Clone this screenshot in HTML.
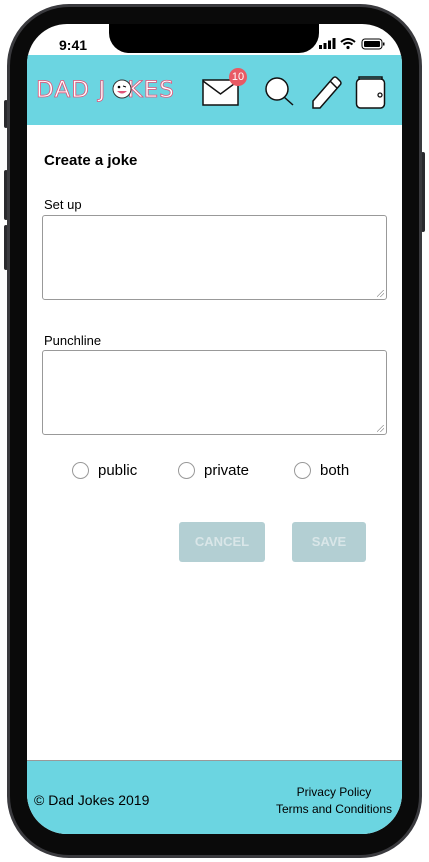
<!DOCTYPE html>
<html><head><meta charset="utf-8">
<style>
*{margin:0;padding:0;box-sizing:border-box}
html,body{width:429px;height:862px;background:#fff;overflow:hidden;font-family:"Liberation Sans",sans-serif}
.phone{position:absolute;left:7px;top:4px;width:415px;height:854px;background:#0a0a0a;border-radius:62px;border:3px solid #3a3a3e}
.btn{position:absolute;background:#2a2a2e;width:4px;left:4px;border-radius:2px}
.screen{position:absolute;left:27px;top:24px;width:375px;height:810px;background:#fff;border-radius:40px;overflow:hidden}
.notch{position:absolute;left:82px;top:0;width:210px;height:29px;background:#000;border-radius:0 0 20px 20px}
.time{position:absolute;left:32px;top:13px;font-size:14px;font-weight:bold}
.hdr{position:absolute;left:0;top:31px;width:375px;height:70px;background:#6bd5e1}
.logo{position:absolute;left:9px;top:23px;font-size:22px;font-weight:normal;color:#fff;letter-spacing:1px;-webkit-text-stroke:0.8px #e0557a;font-family:"DejaVu Sans",sans-serif;transform:scaleX(1.05);transform-origin:left}
.badge{position:absolute;left:202px;top:13px;width:18px;height:18px;border-radius:9px;background:#e85a64;color:#fff;font-size:11px;text-align:center;line-height:18px}
h1{position:absolute;left:17px;top:128px;font-size:15px;font-weight:bold}
.lbl{position:absolute;left:17px;font-size:13px}
.ta{position:absolute;left:15px;width:345px;height:85px;border:1px solid #999;border-radius:3px}
.ta:after{content:"";position:absolute;right:2px;bottom:2px;width:7px;height:7px;background:linear-gradient(135deg,transparent 45%,#999 46%,#999 52%,transparent 53%,transparent 70%,#999 71%,#999 77%,transparent 78%)}
.r{position:absolute;top:438px;font-size:15px}
.r i{position:absolute;left:-26px;top:0;width:17px;height:17px;border:1px solid #999;border-radius:50%}
.b{position:absolute;top:498px;height:40px;background:#b3cfd3;border-radius:3px;color:#d9e6e8;font-weight:bold;font-size:13px;text-align:center;line-height:40px}
.ftr{position:absolute;left:0;top:736px;width:375px;height:74px;background:#6bd5e1;border-top:1px solid #999}
</style></head><body>
<div class="btn" style="top:100px;height:28px"></div>
<div class="btn" style="top:170px;height:50px"></div>
<div class="btn" style="top:225px;height:45px"></div>
<div class="btn" style="left:421px;top:152px;height:80px"></div>
<div class="phone"></div>
<div class="screen">
 <div class="notch"></div>
 <div class="time">9:41</div>
 <svg style="position:absolute;left:292px;top:14px" width="66" height="12">
  <rect x="0" y="7" width="3" height="4" fill="#000"/><rect x="4.5" y="5" width="3" height="6" fill="#000"/><rect x="9" y="2.5" width="3" height="8.5" fill="#000"/><rect x="13.5" y="0" width="3" height="11" fill="#000"/>
  <path d="M22 4 Q29 -2 36 4 M24.5 6.5 Q29 3 33.5 6.5" stroke="#000" stroke-width="2" fill="none"/><circle cx="29" cy="9.5" r="1.6"/>
  <rect x="43" y="1" width="20" height="10" rx="3" fill="none" stroke="#000"/><rect x="45" y="3" width="16" height="6" rx="1" fill="#000"/><rect x="64" y="4.5" width="1.5" height="3" fill="#000"/>
 </svg>
 <div class="hdr">
  <div class="logo">DAD J<span style="display:inline-block;width:20px"></span>KES</div>
  <svg style="position:absolute;left:85px;top:24px" width="20" height="20"><circle cx="10" cy="10" r="9" fill="#fff" stroke="#333"/><circle cx="7" cy="8" r="1.3"/><path d="M11 7 l3 1" stroke="#000"/><path d="M5 12 Q10 17 15 12" fill="#e0557a"/></svg>
  <svg style="position:absolute;left:175px;top:22px" width="38" height="30"><rect x="1" y="3" width="35" height="25" fill="#fff" stroke="#111" stroke-width="1.5"/><path d="M1 4 L18.5 17 L36 4" fill="none" stroke="#111" stroke-width="1.5"/></svg>
  <div class="badge">10</div>
  <svg style="position:absolute;left:237px;top:20px" width="32" height="34"><circle cx="13" cy="14" r="11" fill="#fff" stroke="#111" stroke-width="1.5"/><path d="M20 22 L29 30" stroke="#111" stroke-width="1.5"/></svg>
  <svg style="position:absolute;left:283px;top:18px" width="32" height="37"><path d="M3 35 L3 28 L23 5 Q25 3 27 5 L30 8 Q32 10 30 12 L10 35 Z" fill="#fff" stroke="#111" stroke-width="1.5"/><path d="M20 8 L27 15" stroke="#111" stroke-width="1.5"/></svg>
  <svg style="position:absolute;left:328px;top:20px" width="33" height="35"><rect x="1.5" y="4" width="28" height="29" rx="4" fill="#fff" stroke="#111" stroke-width="1.5"/><path d="M4 5 L4 2 L27 2 L27 5" fill="none" stroke="#111" stroke-width="1.5"/><circle cx="25" cy="20" r="2" fill="none" stroke="#111" stroke-width="1.3"/></svg>
 </div>
 <h1>Create a joke</h1>
 <div class="lbl" style="top:173px">Set up</div>
 <div class="ta" style="top:191px"></div>
 <div class="lbl" style="top:309px">Punchline</div>
 <div class="ta" style="top:326px"></div>
 <div class="r" style="left:71px"><i></i>public</div>
 <div class="r" style="left:177px"><i></i>private</div>
 <div class="r" style="left:293px"><i></i>both</div>
 <div class="b" style="left:152px;width:86px">CANCEL</div>
 <div class="b" style="left:265px;width:74px">SAVE</div>
 <div class="ftr">
  <div style="position:absolute;left:7px;top:31px;font-size:14px">© Dad Jokes 2019</div>
  <div style="position:absolute;right:10px;top:23px;font-size:12px;text-align:center;line-height:17px">Privacy Policy<br>Terms and Conditions</div>
 </div>
</div>
</body></html>
